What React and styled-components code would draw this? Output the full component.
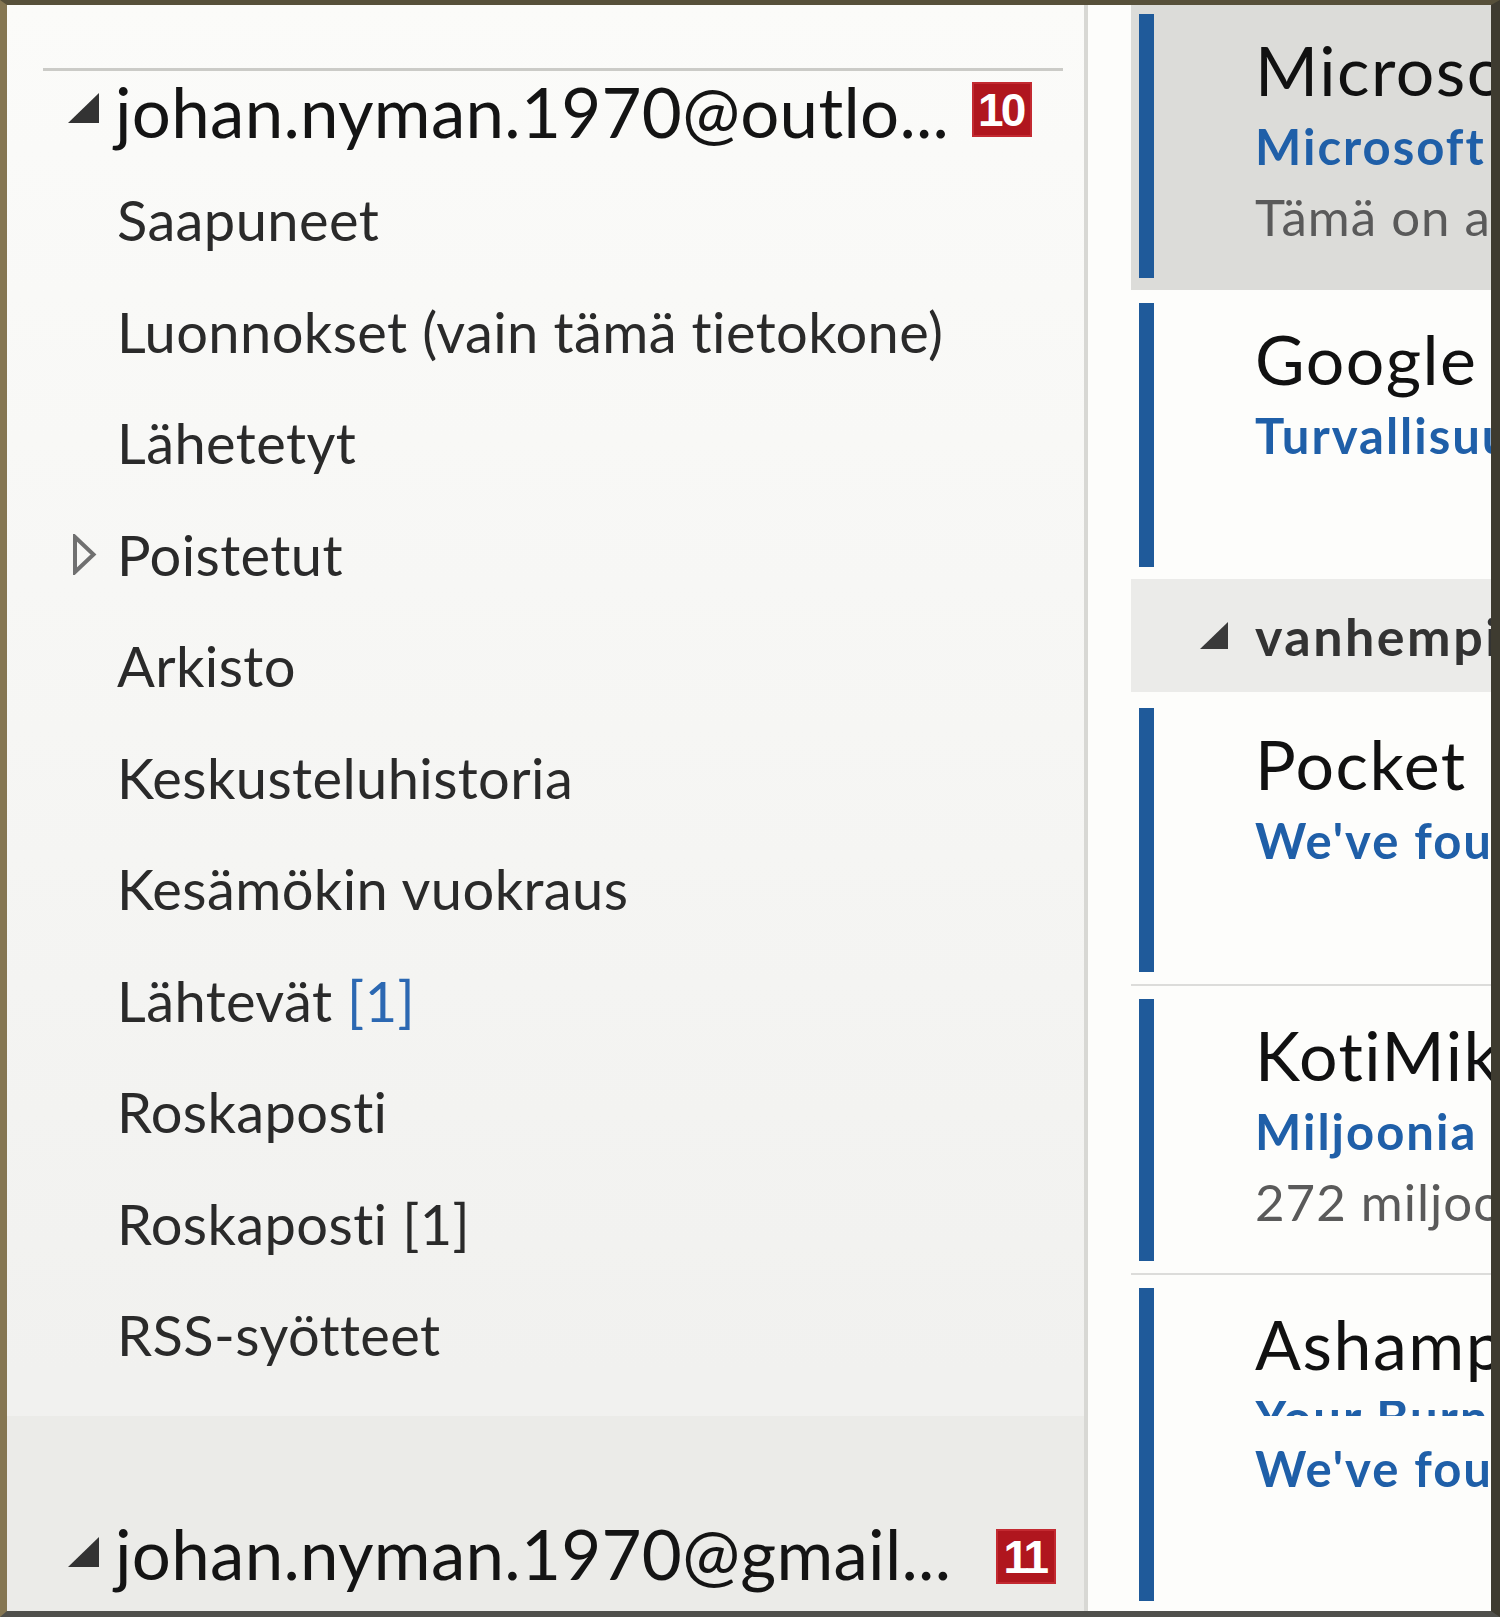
import React from "react";
import styled, { createGlobalStyle } from "styled-components";

const Global = createGlobalStyle`
  html, body { margin: 0; padding: 0; background: #fff; overflow: hidden; }
  * { box-sizing: border-box; }
`;

const Frame = styled.div`
  width: 1500px;
  height: 1617px;
  display: flex;
  border-style: solid;
  border-width: 5px 9px 6px 7px;
  border-color: #57503a #3e3b30 #50504c #857652;
  font-family: Lato, "Open Sans", sans-serif;
  overflow: hidden;
`;

const FolderPane = styled.div`
  width: 1077px;
  flex: none;
  display: flex;
  flex-direction: column;
  padding-top: 63px;
  background: linear-gradient(#fbfbf9 0%, #f6f6f4 45%, #f1f1ef 85%);
`;

const Separator = styled.div`
  margin-left: 36px;
  width: 1020px;
  height: 3px;
  background: #cbcbc7;
`;

const AccountRow = styled.div`
  height: ${(p) => p.$height || 93}px;
  padding-left: 61px;
  display: flex;
  align-items: flex-start;
  flex: none;
`;

const Expander = styled.svg`
  flex: none;
  margin-top: ${(p) => p.$top}px;
`;

const AccountName = styled.span`
  margin-left: 16px;
  font-size: 69px;
  line-height: 1.2;
  color: #141414;
  white-space: nowrap;
  letter-spacing: 0.3px;
`;

const Badge = styled.span`
  flex: none;
  margin-left: ${(p) => p.$gap}px;
  margin-top: ${(p) => p.$top}px;
  width: 60px;
  height: 55px;
  display: inline-flex;
  align-items: center;
  justify-content: center;
  background: #b0161e;
  box-shadow: inset 0 0 0 2px #c32a31;
  color: #fff;
  font-family: "Liberation Sans", Arial, sans-serif;
  font-weight: 700;
  font-size: 46px;
  letter-spacing: -3px;
  padding-right: 3px;
`;

const FolderList = styled.div`
  display: flex;
  flex-direction: column;
`;

const FolderRow = styled.div`
  height: 111.5px;
  display: flex;
  align-items: center;
  padding-left: 65px;
  font-size: 56px;
  line-height: 111.5px;
  letter-spacing: 0.4px;
  color: #2a2a2a;
  white-space: nowrap;
`;

const ExpandSlot = styled.span`
  width: 45px;
  flex: none;
  display: flex;
  align-items: center;
`;

const Count = styled.span`
  color: #2c68b2;
`;

const BottomBand = styled.div`
  margin-top: auto;
  height: 195px;
  padding-top: 97px;
  background: #ebebe8;
`;

const Divider = styled.div`
  width: 4px;
  flex: none;
  background: #d8d8d4;
`;

const MessageList = styled.div`
  flex: 1;
  background: #fdfdfb;
  padding-left: 43px;
  overflow: hidden;
`;

const Scroller = styled.div`
  margin-top: -4px;
  display: flex;
  flex-direction: column;
`;

const MessageItem = styled.div`
  height: ${(p) => p.$height || 289}px;
  flex: none;
  display: flex;
  align-items: stretch;
  background: ${(p) => (p.$selected ? "#dcdcd9" : "transparent")};
  border-top: ${(p) => (p.$divider ? "2px solid #dcdcda" : "none")};
`;

const Bar = styled.div`
  width: 15px;
  flex: none;
  margin: 13px 0 12px 8px;
  background: #1f5a9a;
`;

const Content = styled.div`
  margin-left: 101px;
  padding-top: 28px;
  min-width: 0;
  white-space: nowrap;
  overflow: hidden;
`;

const Sender = styled.div`
  font-size: 68px;
  line-height: 82px;
  color: #111;
  letter-spacing: 1.5px;
`;

const Subject = styled.div`
  font-size: 49px;
  font-weight: 700;
  line-height: 70px;
  color: #1f5fa8;
  letter-spacing: 2px;
  margin-top: ${(p) => p.$top || 0}px;
`;

const Preview = styled.div`
  font-size: 51px;
  line-height: 72px;
  color: #5a5a5a;
  letter-spacing: 1px;
`;

const ClippedLine = styled.div`
  margin-top: 16px;
  height: 15px;
  overflow: hidden;
  & > div {
    line-height: 49px;
    margin-top: -8px;
  }
`;

const GroupHeader = styled.div`
  height: 113px;
  margin-bottom: 3px;
  flex: none;
  display: flex;
  align-items: center;
  padding-left: 69px;
  background: #ebebe9;
  overflow: hidden;
`;

const GroupToggle = styled.svg`
  flex: none;
`;

const GroupTitle = styled.span`
  margin-left: 27px;
  font-size: 52px;
  font-weight: 700;
  color: #333;
  letter-spacing: 2.5px;
  white-space: nowrap;
`;

const DownTri = ({ size = 31, top = 22 }) => (
  <Expander $top={top} width={size} height={size - 1} viewBox="0 0 31 30">
    <polygon points="31,0 31,30 0,30" fill="#333" />
  </Expander>
);

const RightTri = () => (
  <svg width="25" height="41" viewBox="0 0 25 41">
    <polygon points="3,3 21.5,20.5 3,38" fill="none" stroke="#707070" strokeWidth="4" strokeLinejoin="miter" />
  </svg>
);

const folders = [
  { name: "Saapuneet" },
  { name: "Luonnokset (vain tämä tietokone)" },
  { name: "Lähetetyt" },
  { name: "Poistetut", expandable: true },
  { name: "Arkisto" },
  { name: "Keskusteluhistoria" },
  { name: "Kesämökin vuokraus" },
  { name: "Lähtevät", count: "[1]" },
  { name: "Roskaposti" },
  { name: "Roskaposti [1]" },
  { name: "RSS-syötteet" },
];

export default function App() {
  return (
    <>
      <Global />
      <Frame>
        <FolderPane>
          <Separator />
          <AccountRow>
            <DownTri top={22} />
            <AccountName>johan.nyman.1970@outlo...</AccountName>
            <Badge $gap={23} $top={11}>10</Badge>
          </AccountRow>
          <FolderList>
            {folders.map((f) => (
              <FolderRow key={f.name}>
                <ExpandSlot>{f.expandable && <RightTri />}</ExpandSlot>
                {f.name}
                {f.count && <>&nbsp;<Count>{f.count}</Count></>}
              </FolderRow>
            ))}
          </FolderList>
          <BottomBand>
            <AccountRow $height={79}>
              <DownTri top={24} />
              <AccountName>johan.nyman.1970@gmail...</AccountName>
              <Badge $gap={45} $top={16}>11</Badge>
            </AccountRow>
          </BottomBand>
        </FolderPane>
        <Divider />
        <MessageList>
          <Scroller>
            <MessageItem $selected>
              <Bar />
              <Content>
                <Sender>Microsoft-tili</Sender>
                <Subject>Microsoft account</Subject>
                <Preview>Tämä on automaattinen viesti</Preview>
              </Content>
            </MessageItem>
            <MessageItem>
              <Bar />
              <Content>
                <Sender>Google</Sender>
                <Subject>Turvallisuusilmoitus</Subject>
              </Content>
            </MessageItem>
            <GroupHeader>
              <GroupToggle width="28" height="27" viewBox="0 0 28 27">
                <polygon points="28,0 28,27 0,27" fill="#3a3a3a" />
              </GroupToggle>
              <GroupTitle>vanhempi</GroupTitle>
            </GroupHeader>
            <MessageItem>
              <Bar />
              <Content>
                <Sender>Pocket</Sender>
                <Subject>We've found something</Subject>
              </Content>
            </MessageItem>
            <MessageItem $divider>
              <Bar />
              <Content>
                <Sender>KotiMikro</Sender>
                <Subject>Miljoonia käyttäjiä</Subject>
                <Preview>272 miljoonaa sähköpostia</Preview>
              </Content>
            </MessageItem>
            <MessageItem $divider $height={340}>
              <Bar />
              <Content>
                <Sender>Ashampoo</Sender>
                <ClippedLine>
                  <Subject>Your Burning Studio</Subject>
                </ClippedLine>
                <Subject $top={17}>We've found something</Subject>
              </Content>
            </MessageItem>
          </Scroller>
        </MessageList>
      </Frame>
    </>
  );
}
